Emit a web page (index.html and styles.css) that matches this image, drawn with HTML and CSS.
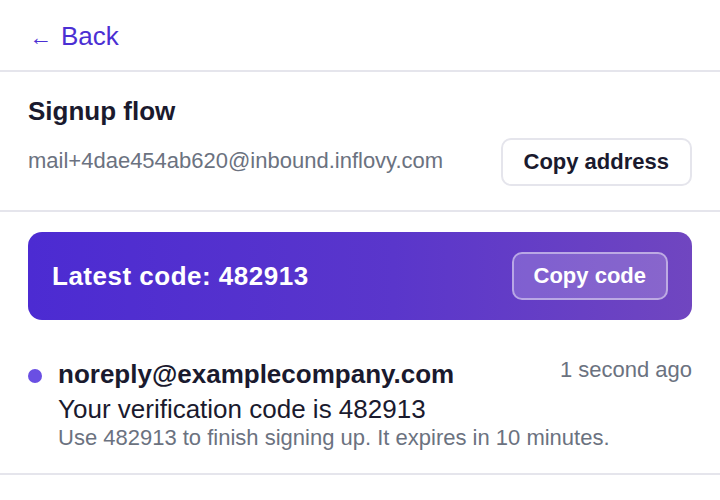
FILE: index.html
```html
<!DOCTYPE html>
<html lang="en">
<head>
<meta charset="utf-8">
<title>Signup flow</title>
<link rel="stylesheet" href="styles.css">
</head>
<body>
<header class="topbar">
  <a class="back" href="#"><span class="back-arrow">←</span><span class="back-label">Back</span></a>
</header>
<section class="inbox-head">
  <h1 class="inbox-title">Signup flow</h1>
  <div class="address-row">
    <span class="address">mail+4dae454ab620@inbound.inflovy.com</span>
    <button class="btn-outline" type="button">Copy address</button>
  </div>
</section>
<section class="code-banner">
  <span class="code-label">Latest code: 482913</span>
  <button class="btn-ghost" type="button">Copy code</button>
</section>
<ul class="messages">
  <li class="message">
    <span class="unread-dot"></span>
    <div class="message-body">
      <div class="message-top">
        <span class="sender">noreply@examplecompany.com</span>
        <span class="time">1 second ago</span>
      </div>
      <div class="subject">Your verification code is 482913</div>
      <div class="preview">Use 482913 to finish signing up. It expires in 10 minutes.</div>
    </div>
  </li>
</ul>
</body>
</html>
```

FILE: styles.css
```css
* { box-sizing: border-box; }
html, body { margin: 0; padding: 0; background: #ffffff; }
body {
  font-family: "Liberation Sans", Arial, sans-serif;
  color: #1a1a2e;
  width: 720px;
}
.topbar {
  padding: 21px 28px 19px;
  border-bottom: 2px solid #e5e5ec;
  height: 72px;
}
.back {
  display: inline-flex;
  align-items: baseline;
  gap: 9px;
  color: #4b2fd3;
  text-decoration: none;
  font-size: 26px;
  line-height: 30px;
}
.back-arrow { font-size: 23px; margin-left: 1px; }
.inbox-head {
  padding: 24px 28px 24px;
  border-bottom: 2px solid #e5e5ec;
}
.inbox-title {
  margin: 0;
  font-size: 26px;
  line-height: 30px;
  font-weight: 700;
  color: #1a1a2e;
}
.address-row {
  margin-top: 12px;
  display: flex;
  align-items: center;
  justify-content: space-between;
}
.address {
  font-size: 22px;
  line-height: 25px;
  color: #6b7280;
  margin-bottom: 4px;
}
.btn-outline {
  height: 48px;
  padding: 0 21px;
  border: 2px solid #e5e5ec;
  border-radius: 10px;
  background: #ffffff;
  font-family: inherit;
  font-size: 22px;
  font-weight: 700;
  color: #1a1a2e;
}
.code-banner {
  margin: 20px 28px 0;
  height: 88px;
  padding: 0 24px;
  border-radius: 14px;
  background: linear-gradient(90deg, #4c2bd2 0%, #5a36cb 55%, #7046c0 100%);
  display: flex;
  align-items: center;
  justify-content: space-between;
}
.code-label {
  color: #ffffff;
  font-size: 26px;
  font-weight: 700;
  letter-spacing: 0.5px;
}
.btn-ghost {
  height: 48px;
  padding: 0 20px;
  border: 2px solid rgba(255, 255, 255, 0.45);
  border-radius: 10px;
  background: rgba(255, 255, 255, 0.18);
  color: #ffffff;
  font-family: inherit;
  font-size: 22px;
  font-weight: 700;
}
.messages {
  list-style: none;
  margin: 0;
  padding: 0;
}
.message {
  display: flex;
  gap: 16px;
  padding: 39px 28px 22px;
  border-bottom: 2px solid #e5e5ec;
}
.unread-dot {
  flex: none;
  width: 14px;
  height: 14px;
  margin-top: 10px;
  border-radius: 50%;
  background: #6a4fe3;
}
.message-body { flex: 1; }
.message-top {
  display: flex;
  justify-content: space-between;
  align-items: flex-start;
}
.sender {
  font-size: 26px;
  line-height: 31px;
  font-weight: 700;
  color: #1a1a2e;
}
.time {
  font-size: 22px;
  line-height: 22px;
  color: #6b7280;
}
.subject {
  margin-top: 4px;
  font-size: 26px;
  line-height: 31px;
  color: #1a1a2e;
}
.preview {
  font-size: 22px;
  line-height: 26px;
  color: #6b7280;
}
```
